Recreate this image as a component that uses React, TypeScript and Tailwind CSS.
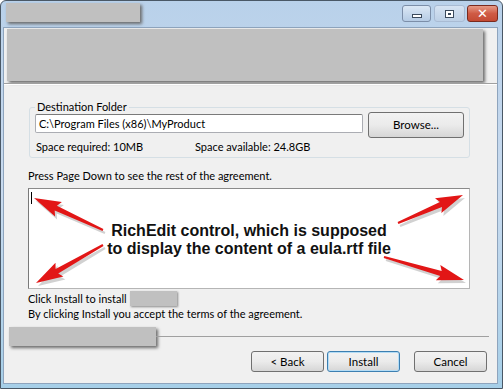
import React from "react";

type Pt = [number, number];

function Arrow({ tail, tip }: { tail: Pt; tip: Pt }) {
    const dx = tip[0] - tail[0];
    const dy = tip[1] - tail[1];
    const len = Math.sqrt(dx * dx + dy * dy);
    const ux = dx / len;
    const uy = dy / len;
    const nx = -uy;
    const ny = ux;
    const headLen = 24;
    const headW = 8;
    const base: Pt = [tip[0] - ux * headLen, tip[1] - uy * headLen];
    const p = (x: number, y: number) => `${x.toFixed(1)},${y.toFixed(1)}`;
    const pts = [
        p(tail[0] + nx * 1, tail[1] + ny * 1),
        p(base[0] + nx * 2.6, base[1] + ny * 2.6),
        p(base[0] + nx * headW - ux * 3, base[1] + ny * headW - uy * 3),
        p(tip[0], tip[1]),
        p(base[0] - nx * headW - ux * 3, base[1] - ny * headW - uy * 3),
        p(base[0] - nx * 2.6, base[1] - ny * 2.6),
        p(tail[0] - nx * 1, tail[1] - ny * 1),
    ].join(" ");
    return (
        <g>
            <polygon points={pts} fill="#7a7a7a" opacity="0.35" transform="translate(2,3)" />
            <polygon points={pts} fill="#e21616" />
        </g>
    );
}

function WinButton({ label, primary }: { label: string; primary?: boolean }) {
    return (
        <button
            className={
                "w-[73px] h-[21px] rounded-[3px] border text-[11.5px] text-black bg-gradient-to-b from-[#f2f2f2] via-[#ebebeb] to-[#d6d6d6] " +
                (primary ? "border-[#3c7fb1] shadow-[inset_0_0_0_1px_#b4dcf5]" : "border-[#707070]")
            }
        >
            {label}
        </button>
    );
}

export default function App() {
    return (
        <div
            className="w-[503px] h-[389px] flex flex-col bg-gradient-to-b from-[#b9d1ea] via-[#c9dbef] to-[#a6cfe8] border border-[#4a5866] rounded-t-[6px] overflow-hidden"
            style={{ fontFamily: "Lato, 'Noto Sans', sans-serif" }}
        >
            {/* title bar */}
            <div className="h-[25px] flex items-start shrink-0">
                <div className="ml-[5px] mt-[2px] w-[134px] h-[19px] bg-[#c0c0c0] shadow-[2px_2px_3px_#6b6b6b]" />
                <div className="ml-auto mr-[4px] mt-[4px] flex">
                    <div className="w-[29px] h-[17px] rounded-[3px] border border-[#7c8ea8] bg-gradient-to-b from-[#dce8f5] to-[#b5cbe4] flex items-end justify-center pb-[3px]">
                        <div className="w-[10px] h-[4px] bg-white border border-[#3b4a5c]" />
                    </div>
                    <div className="ml-[3px] w-[31px] h-[17px] rounded-[3px] border border-[#a9bbd3] bg-gradient-to-b from-[#d6e3f2] to-[#bdd0e6] flex items-center justify-center">
                        <div className="w-[9px] h-[8px] border border-[#3b4a5c] bg-white flex items-center justify-center">
                            <div className="w-[3px] h-[2px] border border-[#3b4a5c]" />
                        </div>
                    </div>
                    <div className="ml-[2px] w-[31px] h-[17px] rounded-[3px] border border-[#7a2a1e] bg-gradient-to-b from-[#e59a86] via-[#cf5b45] to-[#c44a33] flex items-center justify-center text-white text-[13px] font-bold leading-none" style={{ fontFamily: "'DejaVu Sans', sans-serif" }}>
                        ✕
                    </div>
                </div>
            </div>

            {/* body */}
            <div className="ml-[2px] mr-[4px] mt-[1px] h-[357px] bg-[#f0f0f0] border border-[#8ea4bd] text-[11px] text-black flex flex-col">
                <div className="mt-[1px] ml-[3px] w-[476px] h-[52px] bg-[#c0c0c0] shadow-[2px_2px_3px_#6b6b6b]" />
                <div className="mt-[2px] h-px bg-[#a0a0a0]" />
                <div className="h-px bg-white" />

                {/* destination group */}
                <div className="relative mt-[22px] ml-[25px] w-[441px] h-[51px] border border-[#d5dfe5] rounded-[3px]">
                    <div className="absolute left-[5px] top-[-9px] px-[2px] bg-[#f0f0f0] leading-[15px]">Destination Folder</div>
                    <div className="flex items-start pt-[4px] pl-[5px]">
                        <div className="mt-[2px] w-[328px] h-[19px] bg-white border border-[#abadb3] border-t-[#7a7a7a] rounded-[2px] pl-[3px] leading-[17px]">
                            C:\Program Files (x86)\MyProduct
                        </div>
                        <button className="ml-[5px] w-[96px] h-[26px] rounded-[3px] border border-[#707070] bg-gradient-to-b from-[#f2f2f2] via-[#ebebeb] to-[#d6d6d6] text-[11.5px]">
                            Browse...
                        </button>
                    </div>
                    <div className="flex mt-[1px] pl-[6px] leading-[15px]">
                        <span className="w-[159px]">Space required: 10MB</span>
                        <span>Space available: 24.8GB</span>
                    </div>
                </div>

                <div className="mt-[10px] ml-[24px] leading-[15px]">Press Page Down to see the rest of the agreement.</div>

                {/* rich edit */}
                <div className="relative mt-[5px] ml-[24px] w-[442px] h-[101px] bg-white border border-[#b5b5b5] border-l-[#7a7a7a] border-t-[#8a8a8a]">
                    <div className="absolute left-[2px] top-[3px] w-px h-[12px] bg-black" />
                    <div
                        className="absolute left-0 right-0 top-[33px] text-center text-[16px] font-bold leading-[18px] text-[#111]"
                        style={{ fontFamily: "'Liberation Sans', Arial, sans-serif" }}
                    >
                        RichEdit control, which is supposed
                        <br />
                        to display the content of a eula.rtf file
                    </div>
                    <svg className="absolute left-0 top-0" width="442" height="101" viewBox="0 0 442 101">
                        <Arrow tail={[74, 41]} tip={[5, 9]} />
                        <Arrow tail={[369, 34]} tip={[434, 6]} />
                        <Arrow tail={[74, 56]} tip={[7, 94]} />
                        <Arrow tail={[355, 68]} tip={[435, 91]} />
                    </svg>
                </div>

                <div className="mt-[2px] ml-[24px] leading-[15px] flex items-center">
                    Click Install to install
                    <span className="ml-[3px] w-[47px] h-[15px] bg-[#c0c0c0] shadow-[1px_1px_2px_#8a8a8a]" />
                </div>
                <div className="ml-[24px] leading-[15px]">By clicking Install you accept the terms of the agreement.</div>

                {/* bottom separator */}
                <div className="mt-[6px] flex items-center">
                    <div className="ml-[5px] w-[147px] h-[19px] bg-[#c0c0c0] shadow-[2px_2px_3px_#6b6b6b]" />
                    <div className="flex-1 mr-[8px] h-px bg-[#a0a0a0]" />
                </div>

                <div className="mt-[5px] flex justify-end pr-[10px]">
                    <WinButton label="< Back" />
                    <div className="ml-[3px]">
                        <WinButton label="Install" primary />
                    </div>
                    <div className="ml-[14px]">
                        <WinButton label="Cancel" />
                    </div>
                </div>
            </div>
        </div>
    );
}
